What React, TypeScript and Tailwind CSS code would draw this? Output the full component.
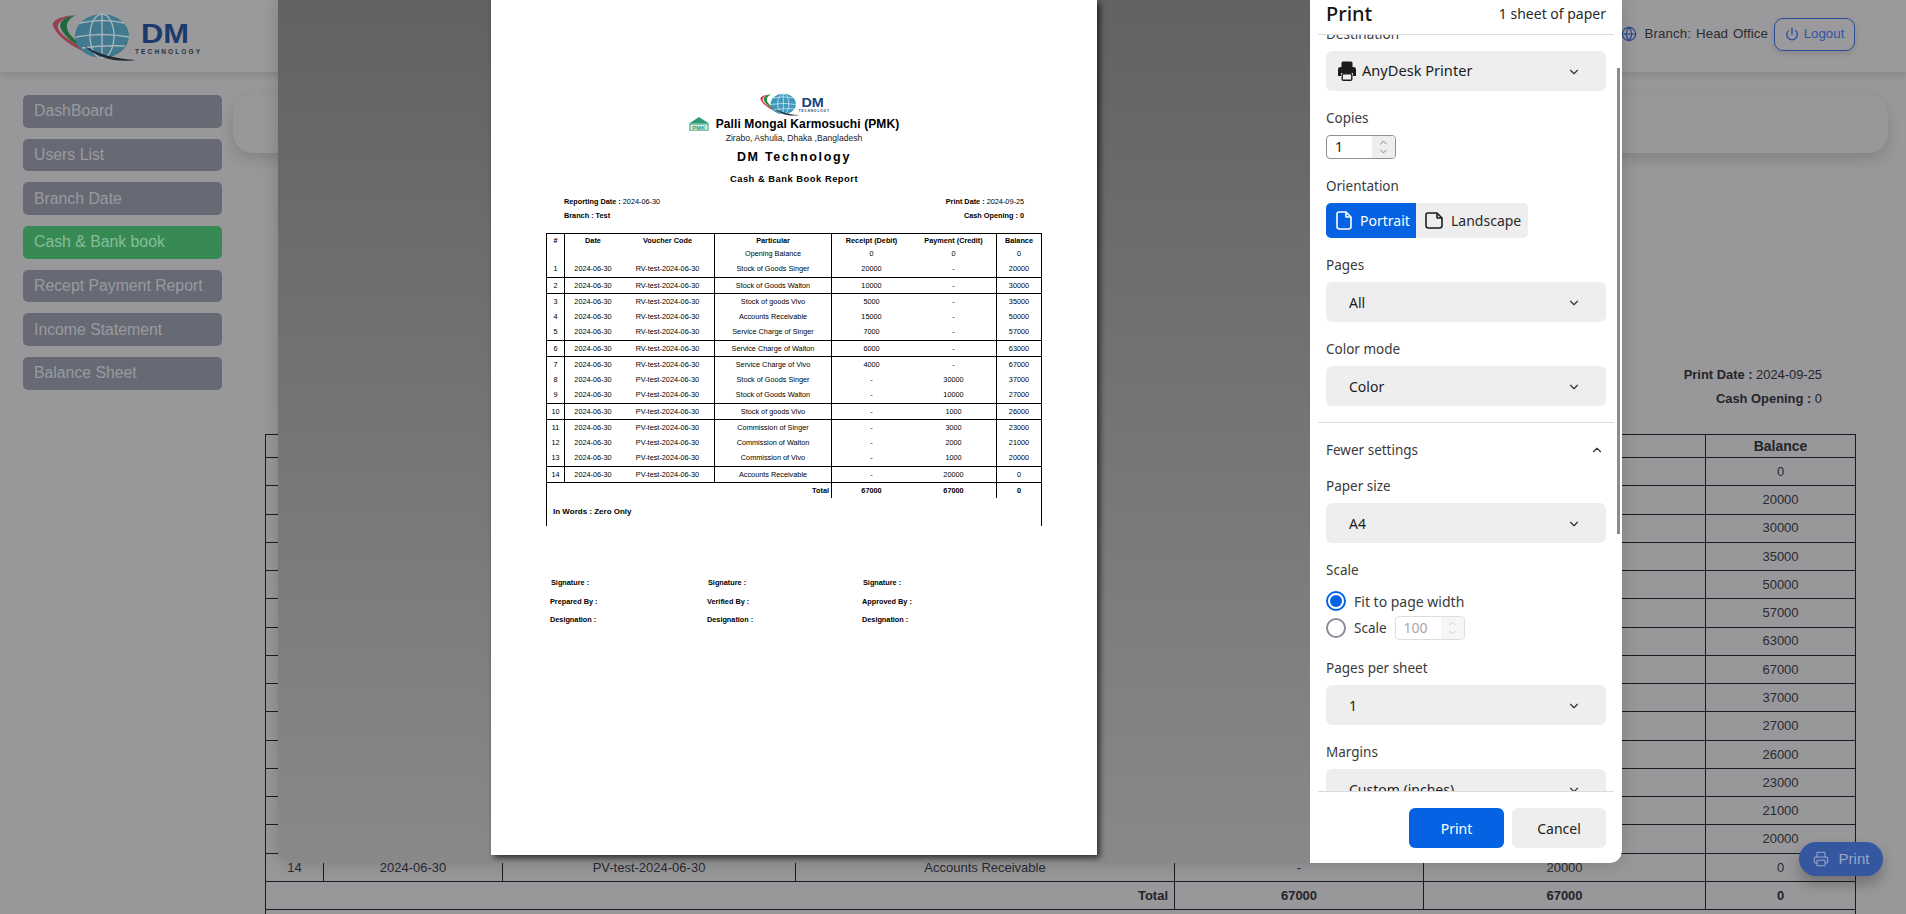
import { ChevronDown, ChevronUp, Globe, Power, Printer } from "lucide-react";

const rows = [
  ["1", "RV-test-2024-06-30", "Stock of Goods Singer", "20000", "-", "20000"],
  ["2", "RV-test-2024-06-30", "Stock of Goods Walton", "10000", "-", "30000"],
  ["3", "RV-test-2024-06-30", "Stock of goods Vivo", "5000", "-", "35000"],
  ["4", "RV-test-2024-06-30", "Accounts Receivable", "15000", "-", "50000"],
  ["5", "RV-test-2024-06-30", "Service Charge of Singer", "7000", "-", "57000"],
  ["6", "RV-test-2024-06-30", "Service Charge of Walton", "6000", "-", "63000"],
  ["7", "RV-test-2024-06-30", "Service Charge of Vivo", "4000", "-", "67000"],
  ["8", "PV-test-2024-06-30", "Stock of Goods Singer", "-", "30000", "37000"],
  ["9", "PV-test-2024-06-30", "Stock of Goods Walton", "-", "10000", "27000"],
  ["10", "PV-test-2024-06-30", "Stock of goods Vivo", "-", "1000", "26000"],
  ["11", "PV-test-2024-06-30", "Commission of Singer", "-", "3000", "23000"],
  ["12", "PV-test-2024-06-30", "Commission of Walton", "-", "2000", "21000"],
  ["13", "PV-test-2024-06-30", "Commission of Vivo", "-", "1000", "20000"],
  ["14", "PV-test-2024-06-30", "Accounts Receivable", "-", "20000", "0"],
];

const ruled = ["2", "3", "6", "7", "10", "11", "14"];
const short = ["4", "8", "12"];

function DmLogo({ small }: { small?: boolean }) {
  return (
    <svg viewBox="0 0 170 60" className={small ? "block w-[80px] h-[28px] mx-auto" : "block w-[170px] h-[60px]"}>
      <path d="M34 9 C18 11 10 15 14 22 C20 34 42 48 68 53 C46 45 22 32 18 22 C16 17 24 12 34 9Z" fill={small ? "#d8384f" : "#9c3f50"} />
      <path d="M36 9 C24 11 18 16 21 23 C26 33 40 42 54 47 C40 38 28 30 27 22 C26 16 30 12 36 9Z" fill={small ? "#1f8f3f" : "#1f6a3c"} />
      <ellipse cx="62" cy="30" rx="27" ry="22" fill={small ? "#3f98bd" : "#41798f"} />
      <g fill="none" stroke={small ? "#eaf5fa" : "#a6b3b9"} strokeWidth="1.4">
        <path d="M40 17 Q62 12 84 17" />
        <path d="M36 31 Q62 26 89 31" />
        <path d="M42 42 Q64 39 85 40" />
        <ellipse cx="62" cy="30" rx="12" ry="22" />
        <path d="M62 8 V52" />
      </g>
      <path d="M44 40 C58 48 76 53 96 54 C76 57 58 52 44 40Z" fill="#1f2933" />
      <text x="101" y="37" fontFamily="'Liberation Sans', sans-serif" fontWeight="700" fontSize="27" fill={small ? "#183f84" : "#1d3a6d"} textLength="48" lengthAdjust="spacingAndGlyphs">DM</text>
      <text x="95" y="48" fontFamily="'Liberation Sans', sans-serif" fontWeight="700" fontSize="6.5" fill={small ? "#1c2e44" : "#26323d"} textLength="65">TECHNOLOGY</text>
    </svg>
  );
}

function PmkIcon() {
  return (
    <svg viewBox="0 0 20 14" className="w-[20px] h-[14px] shrink-0">
      <path d="M10 0 L20 6.5 H0 Z" fill="#2e9b78" />
      <rect x="1" y="7" width="18" height="7" fill="#d9efe6" stroke="#2e9b78" strokeWidth="1" />
      <text x="10" y="13" textAnchor="middle" fontFamily="'Liberation Sans', sans-serif" fontWeight="700" fontSize="6" fill="#2e9b78">PMK</text>
    </svg>
  );
}

function Paper() {
  return (
    <div className="w-[606px] h-[855px] bg-white shrink-0 shadow-[3px_3px_6px_rgba(0,0,0,0.65)] pt-[90px] px-[55px] text-black font-['Liberation_Sans',sans-serif] text-[7.3px] leading-[8px]">
      <DmLogo small />
      <div className="flex justify-center items-center gap-[7px] h-[12px]">
        <PmkIcon />
        <span className="text-[12px] leading-[12px] font-bold whitespace-nowrap tracking-[0.1px]">Palli Mongal Karmosuchi (PMK)</span>
      </div>
      <div className="mt-[3px] h-[10px] text-center text-[8.6px] leading-[10px] text-[#222]">Zirabo, Ashulia, Dhaka ,Bangladesh</div>
      <div className="mt-[7px] h-[14px] text-center text-[12.5px] leading-[14px] font-bold tracking-[1.7px]">DM Technology</div>
      <div className="mt-[10px] h-[10px] text-center text-[9.4px] leading-[10px] font-bold tracking-[0.5px]">Cash &amp; Bank Book Report</div>
      <div className="mt-[14px] h-[8px] px-[18px] flex justify-between">
        <span><b>Reporting Date :</b> 2024-06-30</span>
        <span><b>Print Date :</b> 2024-09-25</span>
      </div>
      <div className="mt-[6px] h-[8px] px-[18px] flex justify-between font-bold">
        <span>Branch : Test</span>
        <span>Cash Opening : 0</span>
      </div>
      <table className="mt-[13px] w-[496px] table-fixed border-separate border-spacing-0 border-t border-x border-black text-center">
        <colgroup>
          <col className="w-[17px]" />
          <col className="w-[57px]" />
          <col className="w-[93px]" />
          <col className="w-[117px]" />
          <col className="w-[80px]" />
          <col className="w-[85px]" />
          <col className="w-[45px]" />
        </colgroup>
        <tbody>
          <tr className="h-[13px] font-bold">
            <td>#</td>
            <td className="border-l border-black">Date</td>
            <td>Voucher Code</td>
            <td className="border-l border-black">Particular</td>
            <td className="border-l border-black">Receipt (Debit)</td>
            <td>Payment (Credit)</td>
            <td className="border-l border-black">Balance</td>
          </tr>
          <tr className="h-[14px]">
            <td></td>
            <td className="border-l border-black"></td>
            <td></td>
            <td className="border-l border-black">Opening Balance</td>
            <td className="border-l border-black">0</td>
            <td>0</td>
            <td className="border-l border-black">0</td>
          </tr>
          {rows.map((r) => {
            const line = ruled.includes(r[0]) ? "border-t border-black" : "";
            return (
              <tr key={r[0]} className={short.includes(r[0]) ? "h-[15px]" : "h-[16px]"}>
                <td className={line}>{r[0]}</td>
                <td className={`${line} border-l border-black whitespace-nowrap`}>2024-06-30</td>
                <td className={`${line} whitespace-nowrap`}>{r[1]}</td>
                <td className={`${line} border-l border-black whitespace-nowrap`}>{r[2]}</td>
                <td className={`${line} border-l border-black`}>{r[3]}</td>
                <td className={line}>{r[4]}</td>
                <td className={`${line} border-l border-black`}>{r[5]}</td>
              </tr>
            );
          })}
          <tr className="h-[16px] font-bold">
            <td colSpan={4} className="border-t border-black text-right pr-[2px]">Total</td>
            <td className="border-t border-l border-black">67000</td>
            <td className="border-t border-black">67000</td>
            <td className="border-t border-l border-black">0</td>
          </tr>
          <tr className="h-[28px] font-bold">
            <td colSpan={7} className="text-left pl-[6px] text-[8px]">In Words : Zero Only</td>
          </tr>
        </tbody>
      </table>
      <div className="mt-[53px] grid grid-cols-[157px_155px_1fr] pl-[4px] font-bold">
        <div className="flex flex-col gap-[10.5px]"><span className="pl-[1px]">Signature :</span><span>Prepared By :</span><span>Designation :</span></div>
        <div className="flex flex-col gap-[10.5px]"><span className="pl-[1px]">Signature :</span><span>Verified By :</span><span>Designation :</span></div>
        <div className="flex flex-col gap-[10.5px]"><span className="pl-[1px]">Signature :</span><span>Approved By :</span><span>Designation :</span></div>
      </div>
    </div>
  );
}

function Chev() {
  return <ChevronDown size={14} strokeWidth={2} className="text-[#333] absolute right-[25px] top-[14px]" />;
}

function Select({ text }: { text: string }) {
  return (
    <div className="relative h-[40px] w-[280px] rounded-[6px] bg-[#eeeeee] flex items-center pl-[23px] text-[14px] text-[#1c1c1c]">
      {text}
      <Chev />
    </div>
  );
}

function Label({ children, className }: { children: React.ReactNode; className?: string }) {
  return <div className={`h-[20px] leading-[20px] text-[13.5px] text-[#3a3a3a] mb-[7px] ${className ?? ""}`}>{children}</div>;
}

function Spin({ value, dim }: { value: string; dim?: boolean }) {
  return (
    <div className={`flex h-[24px] w-[70px] rounded-[4px] border overflow-hidden text-[14px] ${dim ? "border-[#dddddd] text-[#a8a8a8]" : "border-[#8f8f8f] text-[#222]"}`}>
      <span className="flex-1 pl-[8px] leading-[22px]">{value}</span>
      <span className={`w-[23px] flex flex-col items-center justify-center ${dim ? "bg-[#f6f6f6] text-[#cccccc]" : "bg-[#eeeeee] text-[#777]"}`}>
        <ChevronUp size={11} strokeWidth={2} className="-mb-[1px]" />
        <ChevronDown size={11} strokeWidth={2} className="-mt-[1px]" />
      </span>
    </div>
  );
}

function PrintPanel() {
  return (
    <div className="relative w-[312px] bg-white flex flex-col rounded-br-[12px] overflow-hidden font-['Noto_Sans',sans-serif]">
      <div className="mx-[8px] h-[35px] border-b border-[#dcdcdc] flex items-center justify-between pl-[8px] pr-[8px] pb-[7px] shrink-0 relative z-10 bg-white">
        <span className="text-[20px] font-medium text-[#161616] leading-[28px]">Print</span>
        <span className="text-[14px] text-[#2a2a2a]">1 sheet of paper</span>
      </div>
      <div className="h-[756px] overflow-hidden px-[16px] shrink-0">
        <Label className="-mt-[11px]">Destination</Label>
        <div className="relative h-[40px] w-[280px] rounded-[6px] bg-[#eeeeee] flex items-center pl-[12px] gap-[6px] text-[14.6px] text-[#1c1c1c]">
          <svg viewBox="0 0 18 20" className="w-[18px] h-[20px]">
            <path d="M5 0.5 H13 A1.5 1.5 0 0 1 14.5 2 V6 H3.5 V2 A1.5 1.5 0 0 1 5 0.5Z" fill="#1d1d1d" />
            <path d="M2.5 6 H15.5 A2.5 2.5 0 0 1 18 8.5 V15 H15 V12 H3 V15 H0 V8.5 A2.5 2.5 0 0 1 2.5 6Z" fill="#1d1d1d" />
            <rect x="4.2" y="12.7" width="9.6" height="6.6" rx="1.2" fill="#eeeeee" stroke="#1d1d1d" strokeWidth="1.4" />
          </svg>
          AnyDesk Printer
          <Chev />
        </div>
        <Label className="mt-[17px]">Copies</Label>
        <Spin value="1" />
        <Label className="mt-[17px]">Orientation</Label>
        <div className="flex w-[202px] h-[35px] rounded-[5px] overflow-hidden text-[14px]">
          <div className="w-[90px] bg-[#0563e3] text-white flex items-center pl-[10px] gap-[8px]">
            <svg viewBox="0 0 16 19" className="w-[16px] h-[19px]" fill="none" stroke="white" strokeWidth="1.6" strokeLinejoin="round">
              <path d="M3 1 H10 L15 6 V15.5 A2.5 2.5 0 0 1 12.5 18 H3.5 A2.5 2.5 0 0 1 1 15.5 V3 A2 2 0 0 1 3 1Z" />
              <path d="M10 1 V6 H15" />
            </svg>
            Portrait
          </div>
          <div className="flex-1 bg-[#eeeeee] text-[#2a2a2a] flex items-center pl-[9px] gap-[8px]">
            <svg viewBox="0 0 18 17" className="w-[18px] h-[17px]" fill="none" stroke="#1d1d1d" strokeWidth="1.6" strokeLinejoin="round">
              <path d="M3 1 H12 L17 6 V13.5 A2.5 2.5 0 0 1 14.5 16 H3.5 A2.5 2.5 0 0 1 1 13.5 V3 A2 2 0 0 1 3 1Z" />
              <path d="M12 1 V6 H17" />
            </svg>
            Landscape
          </div>
        </div>
        <Label className="mt-[17px]">Pages</Label>
        <Select text="All" />
        <Label className="mt-[17px]">Color mode</Label>
        <Select text="Color" />
        <div className="mt-[16px] -mx-[8px] border-t border-[#dcdcdc]" />
        <div className="mt-[17px] h-[20px] flex items-center justify-between text-[13.5px] text-[#3a3a3a] pr-[2px]">
          Fewer settings
          <ChevronUp size={14} strokeWidth={2} className="text-[#333]" />
        </div>
        <Label className="mt-[16px]">Paper size</Label>
        <Select text="A4" />
        <Label className="mt-[17px]">Scale</Label>
        <div className="mt-[9px] h-[24px] flex items-center gap-[8px] text-[14px] text-[#3a3a3a]">
          <span className="w-[20px] h-[20px] rounded-full border-2 border-[#0563e3] flex items-center justify-center">
            <span className="w-[12px] h-[12px] rounded-full bg-[#0563e3]" />
          </span>
          Fit to page width
        </div>
        <div className="mt-[3px] h-[24px] flex items-center gap-[8px] text-[13.5px] text-[#3a3a3a]">
          <span className="w-[20px] h-[20px] rounded-full border-2 border-[#8b8b98]" />
          Scale
          <Spin value="100" dim />
        </div>
        <Label className="mt-[18px]">Pages per sheet</Label>
        <Select text="1" />
        <Label className="mt-[17px]">Margins</Label>
        <Select text="Custom (inches)" />
      </div>
      <div className="mx-[8px] border-t border-[#dcdcdc] flex justify-end gap-[8px] pt-[16px] pr-[8px] text-[14px]">
        <button className="w-[95px] h-[40px] rounded-[6px] bg-[#0563e3] text-white">Print</button>
        <button className="w-[94px] h-[40px] rounded-[6px] bg-[#eeeeee] text-[#222]">Cancel</button>
      </div>
      <div className="absolute right-[2px] top-[68px] h-[466px] w-[3px] bg-[#8c8c8c]" />
    </div>
  );
}

const nav = ["DashBoard", "Users List", "Branch Date", "Cash & Bank book", "Recept Payment Report", "Income Statement", "Balance Sheet"];

export default function App() {
  return (
    <div className="relative w-[1906px] h-[914px] overflow-hidden bg-[#98989a] font-['Liberation_Sans',sans-serif]">
      <header className="h-[73px] flex items-center justify-between pl-[40px] pr-[51px] border-b border-[#8d8d8f] bg-[#9a9a9c] shadow-[0_2px_8px_rgba(0,0,0,0.12)]">
        <DmLogo />
        <div className="flex items-center gap-[6px] text-[13.3px] text-[#2c2c30] -mt-[4px]">
          <Globe size={16} strokeWidth={1.7} className="text-[#27458f] mr-[2px]" />
          <span className="tracking-[0.1px] [word-spacing:1px]">Branch: Head Office</span>
          <div className="w-[81px] h-[33px] rounded-[9px] border border-[#2a4c9c] flex items-center justify-center gap-[5px] text-[#2f52a3] shadow-[0_2px_6px_rgba(0,0,0,0.12)]">
            <Power size={14} strokeWidth={2.4} />
            Logout
          </div>
        </div>
      </header>
      <div className="flex">
        <nav className="w-[233px] shrink-0 pl-[23px] pr-[11px] pt-[22px] flex flex-col gap-[11px]">
          {nav.map((n) => (
            <div key={n} className={`h-[32.67px] rounded-[5px] pl-[11px] flex items-center text-[15.8px] whitespace-nowrap ${n === "Cash & Bank book" ? "bg-[#388a55] text-[#86bd99]" : "bg-[#676a74] text-[#999aa0]"}`}>
              {n}
            </div>
          ))}
        </nav>
        <main className="flex-1 pr-[18px] pt-[22px]">
          <div className="h-[58px] rounded-[20px] bg-[#98989a] shadow-[0_6px_14px_rgba(0,0,0,0.14)]" />
          <div className="mt-[210px] pr-[66px] text-right text-[12.9px] leading-[24px] text-[#24242a]">
            <div><b>Print Date :</b> 2024-09-25</div>
            <div><b>Cash Opening :</b> 0</div>
          </div>
          <table className="mt-[23px] ml-[32px] w-[1590px] table-fixed border-collapse text-center text-[13px] text-[#2a2a33]">
            <colgroup>
              <col className="w-[58px]" />
              <col className="w-[179px]" />
              <col className="w-[293px]" />
              <col className="w-[379px]" />
              <col className="w-[249px]" />
              <col className="w-[282px]" />
              <col className="w-[150px]" />
            </colgroup>
            <thead>
              <tr className="h-[23px] font-bold text-[14px] text-[#24242a]">
                {["#", "Date", "Voucher Code", "Particular", "Receipt (Debit)", "Payment (Credit)", "Balance"].map((h) => (
                  <th key={h} className="border border-[#1c1c20] font-bold">{h}</th>
                ))}
              </tr>
            </thead>
            <tbody>
              <tr className="h-[28.27px]">
                <td className="border border-[#1c1c20]"></td>
                <td className="border border-[#1c1c20]"></td>
                <td className="border border-[#1c1c20]"></td>
                <td className="border border-[#1c1c20]">Opening Balance</td>
                <td className="border border-[#1c1c20]">0</td>
                <td className="border border-[#1c1c20]">0</td>
                <td className="border border-[#1c1c20]">0</td>
              </tr>
              {rows.map((r) => (
                <tr key={r[0]} className="h-[28.27px]">
                  <td className="border border-[#1c1c20]">{r[0]}</td>
                  <td className="border border-[#1c1c20]">2024-06-30</td>
                  <td className="border border-[#1c1c20]">{r[1]}</td>
                  <td className="border border-[#1c1c20]">{r[2]}</td>
                  <td className="border border-[#1c1c20]">{r[3]}</td>
                  <td className="border border-[#1c1c20]">{r[4]}</td>
                  <td className="border border-[#1c1c20]">{r[5]}</td>
                </tr>
              ))}
              <tr className="h-[28px] font-bold text-[#24242a]">
                <td colSpan={4} className="border border-[#1c1c20] text-right pr-[6px]">Total</td>
                <td className="border border-[#1c1c20]">67000</td>
                <td className="border border-[#1c1c20]">67000</td>
                <td className="border border-[#1c1c20]">0</td>
              </tr>
              <tr className="h-[28px]">
                <td colSpan={7} className="border-x border-[#1c1c20]"></td>
              </tr>
            </tbody>
          </table>
        </main>
      </div>
      <button className="absolute left-[1799px] top-[842px] w-[84px] h-[34px] rounded-full bg-[#35579f] text-[#98a6c8] text-[15px] flex items-center justify-center gap-[10px] shadow-[0_8px_14px_rgba(0,0,0,0.25)]">
        <Printer size={16} strokeWidth={1.6} />
        Print
      </button>
      <div className="absolute left-[278px] top-0 w-[1344px] h-[863px] flex rounded-b-[12px] overflow-hidden shadow-[0_0_18px_rgba(0,0,0,0.18)]">
        <div className="w-[1032px] bg-linear-to-b from-[#626262] to-[#898989] flex justify-center">
          <Paper />
        </div>
        <PrintPanel />
      </div>
    </div>
  );
}
